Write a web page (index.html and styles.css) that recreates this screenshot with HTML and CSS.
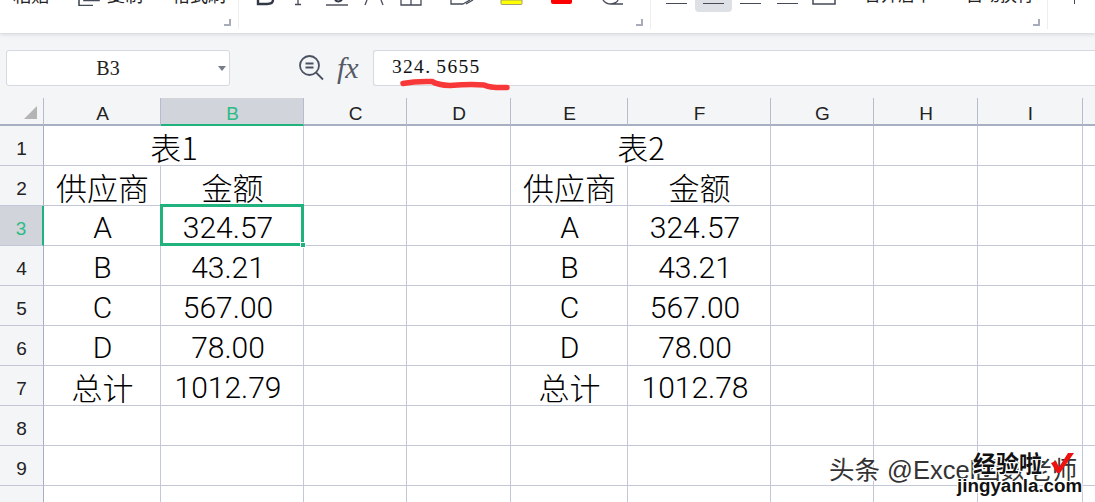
FILE: index.html
```html
<!DOCTYPE html>
<html lang="en">
<head>
  <meta charset="UTF-8" />
  <title>表格</title>
  <link rel="stylesheet" href="styles.css">
</head>
<body>
  <div class="ribbon">
    <div class="group group-clip">
      <span class="clip-text">粘贴</span>
      <span class="clip-item">
        <svg class="clip-icon" width="22" height="6" viewBox="0 0 22 6"><path d="M1 0V5.500H15M6 0V0.500H21V0" fill="none" stroke="#444a58" stroke-width="1.600"/></svg>
        <span class="clip-text">复制</span>
      </span>
      <span class="clip-text">格式刷</span>
      <i class="corner"></i>
    </div>
    <div class="group group-font">
      <svg width="410" height="6" viewBox="239 0 410 6">
        <path d="M258 0V4H267Q273 4 273 0" fill="none" stroke="#333846" stroke-width="2.400"/>
        <path d="M298 0V4M295 4.500H301" fill="none" stroke="#444a58" stroke-width="1.300"/>
        <path d="M335 0Q338 3 342 0" fill="none" stroke="#333846" stroke-width="2"/>
        <path d="M326 5H348" stroke="#333846" stroke-width="1.300"/>
        <path d="M367 0L365 5M381 0L383 5" stroke="#444a58" stroke-width="1.300"/>
        <path d="M401 0V5H421V0M411 0V5" fill="none" stroke="#444a58" stroke-width="1.300"/>
        <path d="M451 0V4H463M463 4L470 0M466 4L473 0" fill="none" stroke="#444a58" stroke-width="1.300"/>
        <path d="M501 0V3.500Q501 4.500 502 4.500H521Q522 4.500 522 3.500V0Z" fill="#ffff00" stroke="#a0a070"/>
        <path d="M551 0V2Q551 4 553 4H570Q572 4 572 2V0Z" fill="#ff0000"/>
        <path d="M603 0Q606 4 611 4H623M611 4Q617 3 618 0" fill="none" stroke="#444a58" stroke-width="1.300"/>
      </svg>
      <i class="corner"></i>
    </div>
    <div class="group group-align">
      <span class="align-line"></span>
      <span class="align-line align-active"></span>
      <span class="align-line"></span>
      <span class="align-line"></span>
      <svg class="merge-box" width="24" height="6" viewBox="0 0 24 6"><path d="M1 0V4H23V0" fill="none" stroke="#444a58" stroke-width="1.500"/></svg>
      <span class="clip-text merge-text">合并居中</span>
      <span class="clip-text wrap-text">自动换行</span>
      <i class="corner"></i>
    </div>
    <div class="group-last"><span class="tick"></span></div>
  </div>

  <div class="formula-bar">
    <div class="name-box">B3<i class="name-arrow"></i></div>
    <div class="formula-icons">
      <svg width="26" height="26" viewBox="0 0 26 26"><circle cx="11.500" cy="10.500" r="9.500" fill="none" stroke="#4a5161" stroke-width="1.800"/><path d="M7.500 8.500H15.500M7.500 12.500H15.500M18 17.500L25 24.500" fill="none" stroke="#4a5161" stroke-width="1.800"/></svg>
      <span class="fx">fx</span>
    </div>
    <div class="formula-input">324<span class="dot">.</span>5655</div>
  </div>

  <table class="sheet">
    <colgroup>
      <col class="col-head"><col class="col-a"><col class="col-b"><col class="col-c"><col class="col-d"><col class="col-a"><col class="col-b"><col class="col-c"><col class="col-d"><col class="col-i"><col class="col-j">
    </colgroup>
    <tr class="letters">
      <th class="corner-cell"><i class="select-all"></i></th>
      <th>A</th><th class="on">B</th><th>C</th><th>D</th><th>E</th><th>F</th><th>G</th><th>H</th><th>I</th><th></th>
    </tr>
    <tr>
      <th class="num">1</th><td class="cjk" colspan="2">表1</td><td></td><td></td><td class="cjk" colspan="2">表2</td><td></td><td></td><td></td><td></td>
    </tr>
    <tr>
      <th class="num">2</th><td class="cjk">供应商</td><td class="cjk">金额</td><td></td><td></td><td class="cjk">供应商</td><td class="cjk">金额</td><td></td><td></td><td></td><td></td>
    </tr>
    <tr>
      <th class="num on">3</th><td>A</td><td class="val active">324.57<i class="handle"></i></td><td></td><td></td><td>A</td><td class="val">324.57</td><td></td><td></td><td></td><td></td>
    </tr>
    <tr>
      <th class="num">4</th><td>B</td><td class="val">43.21</td><td></td><td></td><td>B</td><td class="val">43.21</td><td></td><td></td><td></td><td></td>
    </tr>
    <tr>
      <th class="num">5</th><td>C</td><td class="val">567.00</td><td></td><td></td><td>C</td><td class="val">567.00</td><td></td><td></td><td></td><td></td>
    </tr>
    <tr>
      <th class="num">6</th><td>D</td><td class="val">78.00</td><td></td><td></td><td>D</td><td class="val">78.00</td><td></td><td></td><td></td><td></td>
    </tr>
    <tr>
      <th class="num">7</th><td class="cjk">总计</td><td class="val">1012.79</td><td></td><td></td><td class="cjk">总计</td><td class="val">1012.78</td><td></td><td></td><td></td><td></td>
    </tr>
    <tr>
      <th class="num">8</th><td></td><td></td><td></td><td></td><td></td><td></td><td></td><td></td><td></td><td></td>
    </tr>
    <tr>
      <th class="num">9</th><td></td><td></td><td></td><td></td><td></td><td></td><td></td><td></td><td></td><td></td>
    </tr>
    <tr>
      <th class="num">10</th><td></td><td></td><td></td><td></td><td></td><td></td><td></td><td></td><td></td><td></td>
    </tr>
  </table>

  <svg class="scribble" width="120" height="16" viewBox="395 78 120 16"><path d="M403 83.500Q415 81 432 81.500Q438 85 450 85.500Q470 84 484 85Q490 88 507 87.500" fill="none" stroke="#f83838" stroke-width="5.500" stroke-linecap="round" stroke-linejoin="round"/></svg>

  <div class="watermark">头条 @Excel函数老师</div>
  <div class="stamp">
    <div class="stamp-top">经验啦<svg class="stamp-check" width="24" height="22" viewBox="0 0 24 22"><path d="M1 11L6 9L9 15L18 1H24L10 21H7Z" fill="#ee1111"/></svg></div>
    <div class="stamp-url">jingyanla.com</div>
  </div>
</body>
</html>
```

FILE: styles.css
```css
* {
  margin: 0;
  padding: 0;
  box-sizing: border-box;
}

html {
  overflow: hidden;
  height: 502px;
}

body {
  width: 1095px;
  height: 502px;
  overflow: hidden;
  background: #f4f5f7;
  font-family: "Liberation Sans", "Noto Sans CJK SC", sans-serif;
  color: #000;
}

/* ribbon, only the bottom of the tools is in view */
.ribbon {
  display: flex;
  height: 33px;
  background: #fff;
  box-shadow: 0 1px 4px rgba(90, 95, 110, 0.25);
  position: relative;
}

.group {
  position: relative;
  height: 29px;
  border-right: 1px solid #eceef0;
  display: flex;
  align-items: flex-start;
}

.group-clip {
  width: 239px;
  padding-left: 13px;
  gap: 29px;
}

.group-font {
  width: 412px;
}

.group-align {
  width: 397px;
  padding-left: 7px;
}

.group-last {
  flex: 1;
  padding-left: 26px;
}

.tick {
  display: block;
  width: 1px;
  height: 4px;
  background: #444a58;
}

.clip-item {
  display: flex;
  gap: 7px;
}

.clip-text {
  display: block;
  font-size: 18px;
  line-height: 26px;
  margin-top: -17px;
  color: #222;
}

.corner {
  position: absolute;
  right: 7px;
  top: 19px;
  width: 7px;
  height: 7px;
  border-right: 2px solid #a8acb8;
  border-bottom: 2px solid #a8acb8;
}

.align-line {
  position: relative;
  width: 37px;
  height: 12px;
  display: block;
}

.align-line::after {
  content: "";
  position: absolute;
  left: 8px;
  top: 3px;
  width: 21px;
  height: 1px;
  background: #444a58;
}

.align-active {
  background: #dde0e4;
  border-radius: 0 0 4px 4px;
}

.merge-box {
  margin-left: 6px;
}

.merge-text {
  margin-left: 28px;
  font-size: 17px;
}

.wrap-text {
  margin-left: 34px;
  font-size: 17px;
}

/* formula bar */
.formula-bar {
  display: flex;
  align-items: flex-start;
  height: 65px;
  padding: 17px 0 0 6px;
}

.name-box {
  position: relative;
  width: 224px;
  height: 36px;
  padding-right: 20px;
  background: #fff;
  border: 1px solid #d6d9df;
  border-radius: 3px;
  font-family: "Liberation Serif", serif;
  font-size: 20px;
  line-height: 34px;
  text-align: center;
  color: #222;
}

.name-arrow {
  position: absolute;
  right: 3px;
  top: 15px;
  border-left: 4px solid transparent;
  border-right: 4px solid transparent;
  border-top: 5px solid #777c88;
}

.formula-icons {
  display: flex;
  align-items: center;
  gap: 13px;
  width: 143px;
  height: 36px;
  padding-left: 68px;
}

.fx {
  font-family: "Liberation Serif", serif;
  font-style: italic;
  font-size: 30px;
  color: #555a66;
}

.formula-input {
  flex: 1;
  height: 36px;
  background: #fff;
  border: 1px solid #d6d9df;
  border-right: none;
  border-radius: 3px 0 0 3px;
  padding-left: 18px;
  font-family: "Liberation Serif", serif;
  font-size: 19.500px;
  line-height: 32px;
  letter-spacing: 1.300px;
  color: #111;
}

.dot {
  padding-right: 5px;
}

/* sheet */
.sheet {
  table-layout: fixed;
  width: 1095px;
  border-collapse: separate;
  border-spacing: 0;
  background: #fff;
}

.col-head { width: 44px; }
.col-a { width: 117px; }
.col-b { width: 143px; }
.col-c { width: 103px; }
.col-d { width: 104px; }
.col-i { width: 105px; }
.col-j { width: 13px; }

.sheet td,
.sheet th {
  height: 40px;
  border-right: 1px solid #c3c8d8;
  border-bottom: 1px solid #c3c8d8;
  font-weight: normal;
  text-align: center;
  padding: 0;
  overflow: visible;
}

.sheet td {
  font-family: Roboto, "Liberation Sans", sans-serif;
  font-weight: 300;
  font-size: 30px;
  line-height: 34px;
  padding: 5px 0 0 1px;
  white-space: nowrap;
}

.sheet td.cjk {
  font-family: "Noto Sans CJK SC", sans-serif;
  font-size: 31px;
  font-weight: 300;
  padding-top: 3px;
}

.sheet td.val {
  padding-right: 9px;
}

.sheet tr:last-child td,
.sheet tr:last-child th {
  border-bottom: none;
}

.letters th {
  height: 28px;
  background: #f4f5f7;
  font-size: 19px;
  line-height: 20px;
  padding: 5px 0 0 1px;
  border-right-color: #b6bccd;
  border-bottom-color: #a9afc3;
  border-bottom-width: 2px;
  color: #222;
}

.letters th.on {
  background: #d1d4db;
  border-bottom-color: #1fb27c;
  color: #2dbb85;
}

.corner-cell {
  position: relative;
}

.select-all {
  position: absolute;
  left: 24px;
  top: 8px;
  width: 0;
  height: 0;
  border-left: 13px solid transparent;
  border-bottom: 13px solid #b4b4b4;
}

.sheet .num {
  background: #f4f5f7;
  font-size: 19px;
  line-height: 24px;
  padding-top: 6px;
  color: #222;
  border-right-color: #a9afc3;
}

.sheet .num.on {
  background: #d1d4db;
  color: #2dbb85;
  border-right: 2px solid #1fb27c;
}

.active {
  position: relative;
}

.active::after {
  content: "";
  position: absolute;
  left: -1px;
  top: -2px;
  right: -1px;
  bottom: -1px;
  border: 3px solid #1fb27c;
}

.handle {
  position: absolute;
  right: -3px;
  bottom: -3px;
  width: 6px;
  height: 6px;
  background: #1fb27c;
  border: 1px solid #fff;
  z-index: 1;
}

/* things lying over the sheet */
.scribble {
  position: absolute;
  left: 395px;
  top: 78px;
}

.watermark {
  position: absolute;
  left: 829px;
  top: 452px;
  font-size: 25.500px;
  line-height: 36px;
  color: #333;
  white-space: nowrap;
  text-shadow: 1px 1px 0 #fff, -1px 1px 0 #fff;
}

.stamp {
  position: absolute;
  left: 957px;
  top: 452px;
  width: 122px;
  font-weight: bold;
  color: #111;
  text-shadow: 1px 0 0 #fff, -1px 0 0 #fff, 0 1px 0 #fff, 0 -1px 0 #fff, 1px 1px 0 #fff, -1px -1px 0 #fff, 1px -1px 0 #fff, -1px 1px 0 #fff;
}

.stamp-top {
  position: relative;
  padding-left: 16px;
  font-size: 23px;
  line-height: 25px;
  white-space: nowrap;
}

.stamp-check {
  position: absolute;
  left: 93px;
  top: 0;
}

.stamp-url {
  font-size: 18.800px;
  line-height: 17px;
  white-space: nowrap;
}
```
